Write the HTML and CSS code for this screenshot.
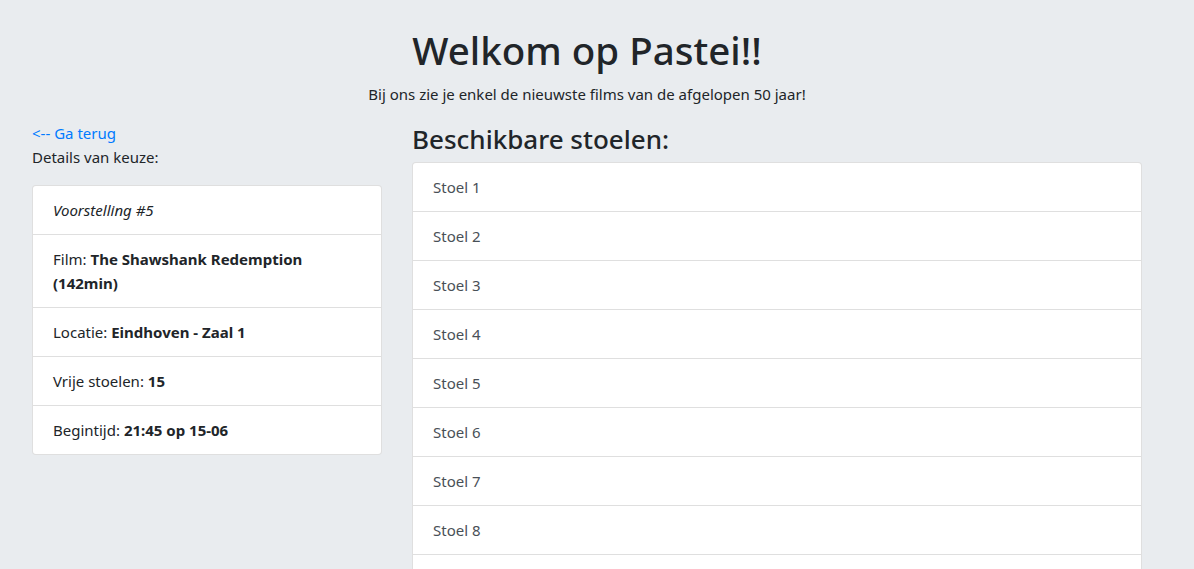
FILE: index.html
```html
<!DOCTYPE html>
<html lang="nl">
<head>
<meta charset="utf-8">
<title>Pastei</title>
<link rel="stylesheet" href="styles.css">
</head>
<body>
<div class="page">
  <header class="header">
    <h1 class="title">Welkom op Pastei!!</h1>
    <p class="lead">Bij ons zie je enkel de nieuwste films van de afgelopen 50 jaar!</p>
  </header>
  <div class="row">
    <div class="col col-left">
      <a class="back" href="#">&lt;-- Ga terug</a>
      <p class="details">Details van keuze:</p>
      <ul class="list">
        <li class="item"><em>Voorstelling #5</em></li>
        <li class="item">Film: <b>The Shawshank Redemption (142min)</b></li>
        <li class="item">Locatie: <b>Eindhoven - Zaal 1</b></li>
        <li class="item">Vrije stoelen: <b>15</b></li>
        <li class="item">Begintijd: <b>21:45 op 15-06</b></li>
      </ul>
    </div>
    <div class="col col-right">
      <h3 class="subtitle">Beschikbare stoelen:</h3>
      <ul class="list seats">
        <li class="item seat">Stoel 1</li>
        <li class="item seat">Stoel 2</li>
        <li class="item seat">Stoel 3</li>
        <li class="item seat">Stoel 4</li>
        <li class="item seat">Stoel 5</li>
        <li class="item seat">Stoel 6</li>
        <li class="item seat">Stoel 7</li>
        <li class="item seat">Stoel 8</li>
        <li class="item seat">Stoel 9</li>
        <li class="item seat">Stoel 10</li>
      </ul>
    </div>
  </div>
</div>
</body>
</html>
```
FILE: styles.css
```css
html, body {
  margin: 0;
  padding: 0;
  background: #e9ecef;
}
body {
  font-family: "Noto Sans", "Open Sans", sans-serif;
  font-size: 15px;
  line-height: 24px;
  color: #212529;
}
.page {
  width: 1140px;
  margin-left: 17px;
}
.header {
  padding-top: 26px;
  text-align: center;
}
.title {
  margin: 0 0 8px;
  font-size: 38.5px;
  line-height: 48px;
  font-weight: 500;
}
.lead {
  margin: 0 0 16px;
}
.row {
  display: flex;
}
.col {
  padding: 0 15px;
  box-sizing: border-box;
}
.col-left { width: 380px; }
.col-right { width: 760px; }
.back {
  display: block;
  color: #007bff;
  text-decoration: none;
  line-height: 22px;
}
.details {
  margin: 0 0 15px;
  line-height: 26px;
}
.list {
  list-style: none;
  margin: 0;
  padding: 0;
  background: #fff;
  border: 1px solid rgba(0,0,0,.125);
  border-radius: 4px;
}
.item {
  padding: 12px 20px;
  border-top: 1px solid rgba(0,0,0,.125);
}
.item:first-child { border-top: 0; }
.item b { font-weight: 700; }
.subtitle {
  margin: 0 0 6px;
  font-size: 26px;
  line-height: 34px;
  font-weight: 500;
}
.seat { color: #495057; }
```
